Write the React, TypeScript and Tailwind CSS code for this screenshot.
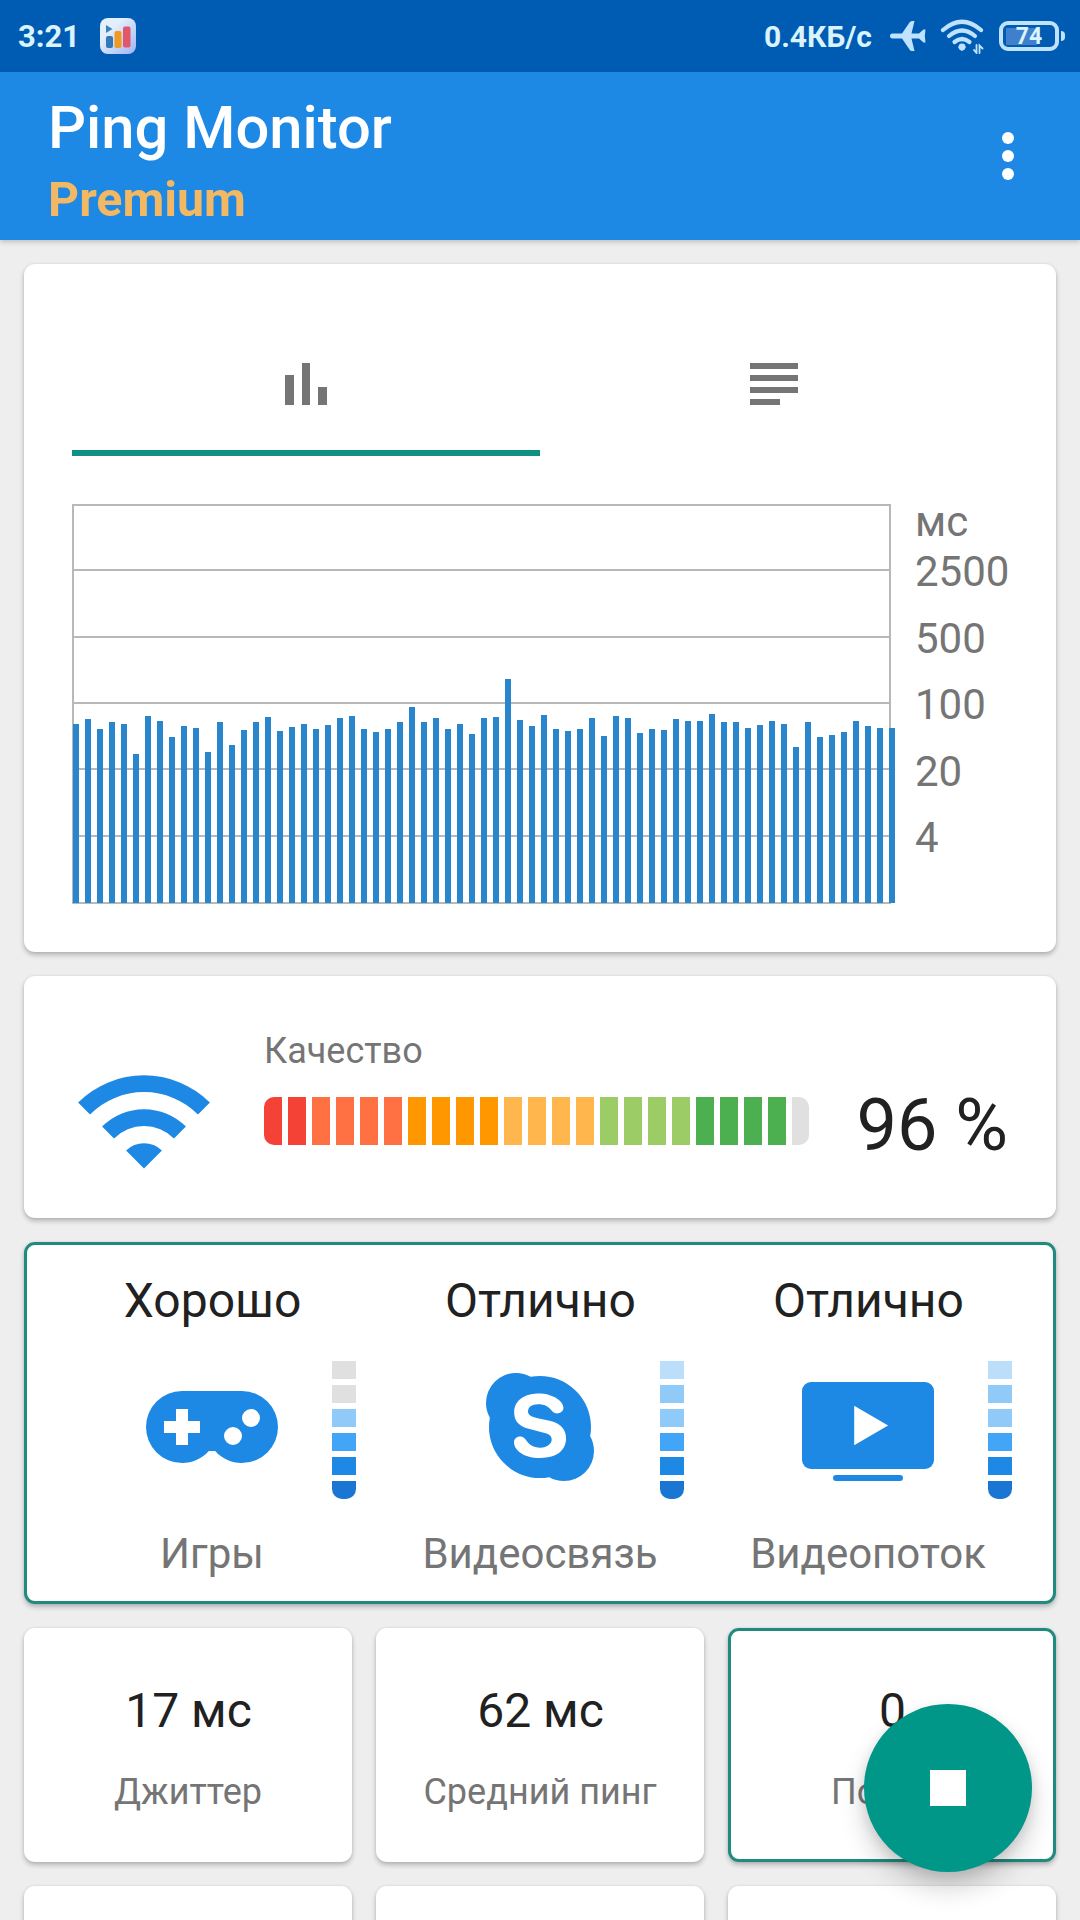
import { ReactNode } from "react";
import clsx from "clsx";

const pings = [
  179, 184, 174, 181, 179, 149, 187, 182, 166, 177, 175, 151, 181, 158, 173,
  181, 186, 172, 176, 179, 174, 178, 185, 187, 174, 171, 174, 181, 196, 181,
  185, 174, 179, 169, 185, 186, 224, 183, 177, 188, 174, 172, 174, 185, 167,
  187, 185, 170, 174, 173, 184, 182, 182, 189, 181, 181, 175, 178, 182, 179,
  156, 181, 166, 168, 171, 182, 177, 175, 175,
];

const gridLines = [66, 133, 199, 265, 332];

const qualitySegments = [
  ...Array(2).fill("bg-[#f44336]"),
  ...Array(4).fill("bg-[#ff7043]"),
  ...Array(4).fill("bg-[#ff9800]"),
  ...Array(4).fill("bg-[#ffb74d]"),
  ...Array(4).fill("bg-[#9ccc65]"),
  ...Array(4).fill("bg-[#4caf50]"),
  "bg-[#e0e0e0]",
];

const levelColors = [
  "bg-[#bbdefb]",
  "bg-[#90caf9]",
  "bg-[#90caf9]",
  "bg-[#42a5f5]",
  "bg-[#1e88e5]",
  "bg-[#1976d2]",
];

interface CardProps {
  children?: ReactNode;
  className?: string;
  active?: boolean;
}

function Card({ children, className, active }: CardProps) {
  return (
    <div
      className={clsx(
        "rounded-[11px] bg-white shadow-[0_3px_5px_rgba(0,0,0,0.24),0_0_3px_rgba(0,0,0,0.08)]",
        active && "border-[3px] border-[#1f8a7e]",
        className
      )}
    >
      {children}
    </div>
  );
}

function StatusBar() {
  return (
    <div className="flex h-[72px] items-center bg-[#005cb2] pr-[15px] pl-[18px] text-[#d9f3ff]">
      <span className="w-[61px] pt-[2px] text-[31px] font-bold">3:21</span>
      <svg className="ml-[21px] size-[36px]" viewBox="0 0 36 36">
        <defs>
          <linearGradient id="app" x1="0" y1="0" x2="1" y2="1">
            <stop offset="0.3" stopColor="#e4effd" />
            <stop offset="1" stopColor="#9fb4f3" />
          </linearGradient>
        </defs>
        <rect width="36" height="36" rx="8" fill="url(#app)" />
        <path d="M6 7 L12.500 11 L6 15Z" fill="#3c84b8" />
        <rect x="6" y="18" width="7" height="12" rx="2" fill="#3478b8" />
        <rect x="14.500" y="13" width="7" height="17" rx="2" fill="#f09a22" />
        <rect x="23" y="8.500" width="7.500" height="21" rx="2" fill="#e2566a" />
      </svg>
      <span className="ml-auto text-[30px] font-bold">0.4КБ/с</span>
      <svg className="ml-[18px] h-[32px] w-[36px]" viewBox="0 0 36 32" fill="#bfe3ff">
        <path d="M2.500 13.500 H12 L19.500 2.500 Q20.500 1 22 1 H24.500 L21.500 13.500 H29 L33.500 9.500 H35.500 L34.800 16 L35.500 22.500 H33.500 L29 18.500 H21.500 L24.500 31 H22 Q20.500 31 19.500 29.500 L12 18.500 H2.500 A2.500 2.500 0 0 1 2.500 13.500Z" />
      </svg>
      <svg
        className="ml-[14px] h-[36px] w-[44px]"
        viewBox="0 0 44 36"
        fill="none"
        stroke="#bfe3ff"
        strokeWidth="4.200"
        strokeLinecap="round"
      >
        <path d="M3 12 Q22 -4.500 41 12" />
        <path d="M9 18 Q22 7 35 18" />
        <path d="M14.500 24 Q22 18 29.500 24" />
        <path d="M18 29 Q22 25 26 29 L22 33Z" fill="#bfe3ff" stroke="none" />
        <circle cx="22" cy="29" r="3.400" fill="#bfe3ff" stroke="none" />
        <path d="M36.500 27 V35 L34 32 M39.500 35 V27.500 L42.500 30.500" strokeWidth="1.800" />
      </svg>
      <div className="ml-[15px] flex h-[30px] w-[60px] items-center justify-center rounded-[9px] border-[4px] border-[#bfe3ff] bg-[linear-gradient(#3f7fcc,#3f7fcc)] bg-[length:31px_17px] bg-[position:3px_center] bg-no-repeat pt-[2px] text-[23px] font-bold">
        74
      </div>
      <div className="ml-[2px] h-[10px] w-[4px] rounded-r-full bg-[#bfe3ff]" />
    </div>
  );
}

function Header() {
  return (
    <header className="flex h-[168px] items-center justify-between bg-[#1e88e5] pr-[66px] pl-[48px] shadow-[0_2px_5px_rgba(0,0,0,0.2)]">
      <div className="h-full pt-[20px]">
        <h1 className="text-[59.700px] leading-[72px] font-medium text-white">
          Ping Monitor
        </h1>
        <p className="text-[48.300px] leading-[72px] font-bold text-[#f2b863]">
          Premium
        </p>
      </div>
      <div className="flex flex-col gap-[6px]">
        <span className="size-[12px] rounded-full bg-white" />
        <span className="size-[12px] rounded-full bg-white" />
        <span className="size-[12px] rounded-full bg-white" />
      </div>
    </header>
  );
}

function PingChart() {
  return (
    <Card className="h-[688px] p-[48px]">
      <div className="grid h-[144px] grid-cols-2">
        <div className="flex items-center justify-center border-b-[6px] border-[#0e9085] pt-[6px]">
          <svg className="h-[42px] w-[42px]" viewBox="0 0 42 42" fill="#757575">
            <path d="M0 12h9v30H0zM17 0h8v42h-8zM33 24h9v18h-9z" />
          </svg>
        </div>
        <div className="flex items-center justify-center">
          <svg className="h-[42px] w-[48px]" viewBox="0 0 48 42" fill="#757575">
            <path d="M0 0h48v6H0zM0 12h48v6H0zM0 24h48v6H0zM0 36h30v6H0z" />
          </svg>
        </div>
      </div>
      <div className="mt-[48px] flex">
        <svg className="h-[400px] w-[824px] shrink-0" viewBox="0 0 824 400">
          <rect x="1" y="1" width="817" height="398" fill="none" stroke="#b8b8b8" strokeWidth="2" />
          {gridLines.map((y) => (
            <line key={y} x1="0" x2="818" y1={y} y2={y} stroke="#b8b8b8" strokeWidth="2" />
          ))}
          {pings.map((h, i) => (
            <rect key={i} x={1 + i * 12} y={399 - h} width="6" height={h} fill="#2a86cc" />
          ))}
        </svg>
        <div className="ml-[19px] pt-[1px] text-[42px] text-[#757575]">
          <div className="h-[34.400px] leading-[34.400px]">мс</div>
          {[2500, 500, 100, 20, 4].map((n) => (
            <div key={n} className="h-[66.400px] leading-[66.400px]">
              {n}
            </div>
          ))}
        </div>
      </div>
    </Card>
  );
}

function Quality() {
  return (
    <Card className="flex h-[242px]">
      <div className="flex w-[240px] justify-center pt-[99px]">
        <svg className="h-[94px] w-[132px]" viewBox="-66 -93.500 132 94" fill="#1e88e5">
          <path d="M0 0L-17.900 -17.900A25.300 25.300 0 0 1 17.900 -17.900Z" />
          <path d="M-30 -30L-41.900 -41.900A59.300 59.300 0 0 1 41.900 -41.900L30 -30A42.400 42.400 0 0 0 -30 -30Z" />
          <path d="M-54 -54L-65.900 -65.900A93.200 93.200 0 0 1 65.900 -65.900L54 -54A76.300 76.300 0 0 0 -54 -54Z" />
        </svg>
      </div>
      <div className="w-[545px] pt-[51px]">
        <div className="text-[36px] leading-[48px] text-[#757575]">Качество</div>
        <div className="mt-[22px] flex gap-[6px] overflow-hidden rounded-[10px]">
          {qualitySegments.map((color, i) => (
            <span key={i} className={clsx("h-[48px] w-[18px] shrink-0", color)} />
          ))}
        </div>
      </div>
      <div className="flex-1 pt-[108px] pr-[48px] text-right text-[72px] leading-[84px] whitespace-nowrap text-[#212121]">
        96 %
      </div>
    </Card>
  );
}

interface ServiceProps {
  rating: string;
  label: string;
  level: number;
  icon: ReactNode;
}

function Service({ rating, label, level, icon }: ServiceProps) {
  return (
    <div className="w-[328px] text-center">
      <div className="pl-[1px] text-[48px] leading-[56px] text-[#212121]">{rating}</div>
      <div className="mt-[26px] flex items-end pr-[20px] pl-[92px]">
        <svg className="size-[144px]" viewBox="0 0 24 24" fill="#1e88e5">
          {icon}
        </svg>
        <div className="ml-[48px] flex flex-col gap-[6px] overflow-hidden rounded-b-[10px]">
          {levelColors.map((color, i) => (
            <span
              key={i}
              className={clsx("h-[18px] w-[24px]", i < 6 - level ? "bg-[#e0e0e0]" : color)}
            />
          ))}
        </div>
      </div>
      <div className="mt-[31px] text-[42px] leading-[48px] text-[#757575]">{label}</div>
    </div>
  );
}

function Services() {
  return (
    <Card active className="flex h-[362px] justify-center pt-[28px]">
      <Service
        rating="Хорошо"
        label="Игры"
        level={4}
        icon={
          <path d="M7,6H17A6,6 0 0,1 23,12A6,6 0 0,1 17,18C15.22,18 13.63,17.23 12.53,16H11.47C10.37,17.23 8.78,18 7,18A6,6 0 0,1 1,12A6,6 0 0,1 7,6M6,9V11H4V13H6V15H8V13H10V11H8V9H6M15.5,12A1.5,1.5 0 0,0 14,13.5A1.5,1.5 0 0,0 15.5,15A1.5,1.5 0 0,0 17,13.5A1.5,1.5 0 0,0 15.5,12M18.5,9A1.5,1.5 0 0,0 17,10.5A1.5,1.5 0 0,0 18.5,12A1.5,1.5 0 0,0 20,10.5A1.5,1.5 0 0,0 18.5,9Z" />
        }
      />
      <Service
        rating="Отлично"
        label="Видеосвязь"
        level={6}
        icon={
          <path d="M18,6C20.07,8.04 20.85,10.89 20.36,13.55C20.77,14.27 21,15.11 21,16A5,5 0 0,1 16,21C15.11,21 14.27,20.77 13.55,20.36C10.89,20.85 8.04,20.07 6,18C3.93,15.96 3.15,13.11 3.64,10.45C3.23,9.73 3,8.89 3,8A5,5 0 0,1 8,3C8.89,3 9.73,3.23 10.45,3.64C13.11,3.15 15.96,3.93 18,6M12.04,17.16C14.91,17.16 16.34,15.78 16.34,13.92C16.34,12.73 15.78,11.46 13.61,10.97L11.62,10.53C10.86,10.36 10,10.13 10,9.42C10,8.7 10.6,8.2 11.7,8.2C13.93,8.2 13.72,9.73 14.83,9.73C15.41,9.73 15.91,9.39 15.91,8.8C15.91,7.43 13.72,6.4 11.86,6.4C9.85,6.4 7.7,7.26 7.7,9.54C7.7,10.64 8.09,11.81 10.25,12.35L12.94,13.03C13.75,13.23 13.95,13.68 13.95,14.1C13.95,14.78 13.27,15.45 12.04,15.45C9.63,15.45 9.96,13.6 8.67,13.6C8.09,13.6 7.67,14 7.67,14.57C7.67,15.68 9,17.16 12.04,17.16Z" />
        }
      />
      <Service
        rating="Отлично"
        label="Видеопоток"
        level={6}
        icon={
          <>
            <rect x="1" y="4.500" width="22" height="14.500" rx="1.500" />
            <path d="M9.700 8.450v6.600l5.650-3.300z" fill="#fff" />
            <rect x="6.170" y="20" width="11.660" height="1" rx="0.500" />
          </>
        }
      />
    </Card>
  );
}

interface StatProps {
  value: string;
  label: string;
  active?: boolean;
}

function Stat({ value, label, active }: StatProps) {
  return (
    <Card active={active} className={clsx("h-[234px] text-center", active ? "pt-[52px]" : "pt-[55px]")}>
      <div className="pl-[1px] text-[48px] leading-[56px] text-[#212121]">{value}</div>
      <div className="mt-[31px] text-[36px] leading-[44px] text-[#757575]">{label}</div>
    </Card>
  );
}

export default function App() {
  return (
    <div className="relative h-[1920px] w-[1080px] overflow-hidden bg-[#eeeeee] font-[Roboto,sans-serif]">
      <StatusBar />
      <Header />
      <main className="flex flex-col gap-[24px] p-[24px]">
        <PingChart />
        <Quality />
        <Services />
        <div className="grid grid-cols-3 gap-[24px]">
          <Stat value="17 мс" label="Джиттер" />
          <Stat value="62 мс" label="Средний пинг" />
          <Stat value="0" label="Потери" active />
          <Card className="h-[234px]" />
          <Card className="h-[234px]" />
          <Card className="h-[234px]" />
        </div>
      </main>
      <button className="absolute right-[48px] bottom-[48px] flex size-[168px] items-center justify-center rounded-full bg-[#009688] shadow-[0_16px_26px_rgba(0,0,0,0.18),0_4px_12px_rgba(0,0,0,0.1)]">
        <span className="size-[36px] bg-white" />
      </button>
    </div>
  );
}
